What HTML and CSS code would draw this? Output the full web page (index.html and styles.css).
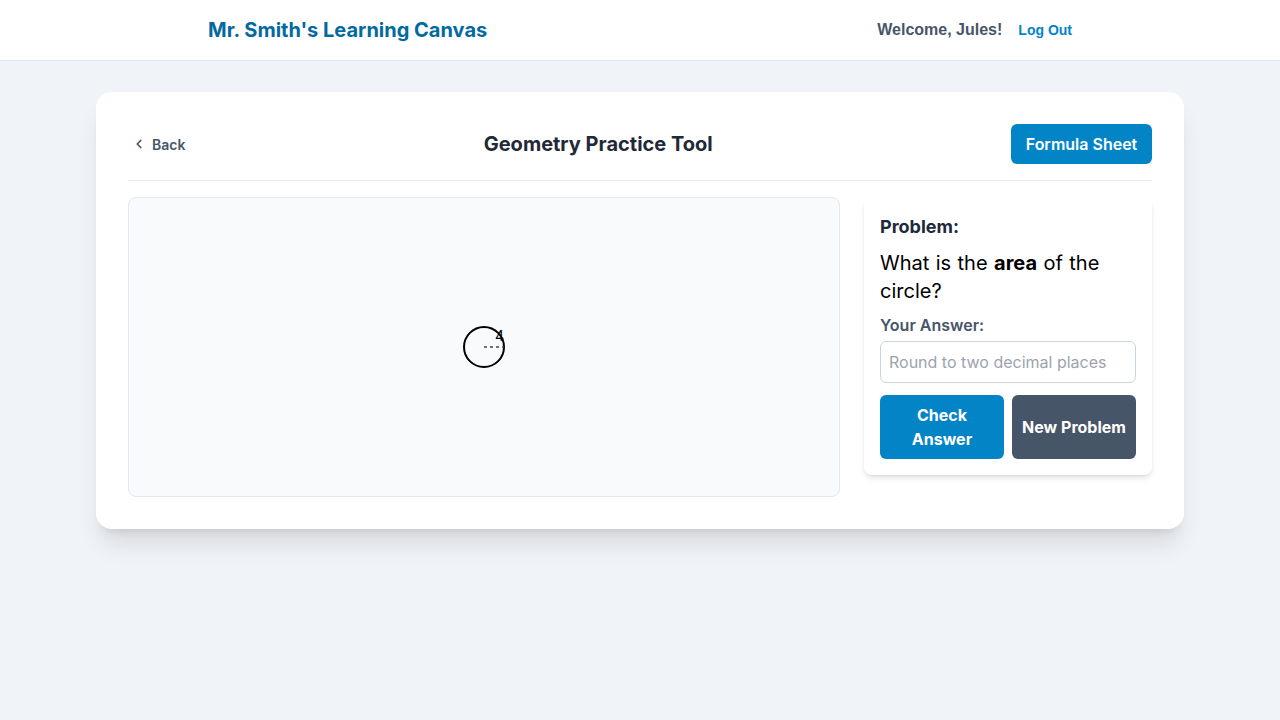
FILE: index.html
```html
<!DOCTYPE html>
<html>
<head>
<meta charset="utf-8">
<link rel="stylesheet" href="styles.css">
</head>
<body>
<header class="topbar">
  <div class="topbar-inner">
    <h1 class="brand">Mr. Smith's Learning Canvas</h1>
    <div class="user">
      <span class="welcome">Welcome, Jules!</span>
      <a class="logout" href="#">Log Out</a>
    </div>
  </div>
</header>
<main class="main">
  <section class="card">
    <div class="card-head">
      <a class="back" href="#">
        <svg width="14" height="14" viewBox="0 0 24 24" fill="none" stroke="currentColor" stroke-width="3" stroke-linecap="round" stroke-linejoin="round"><path d="M15 18l-6-6 6-6"/></svg>
        <span>Back</span>
      </a>
      <h2 class="title">Geometry Practice Tool</h2>
      <button class="btn-formula">Formula Sheet</button>
    </div>
    <div class="workspace">
      <div class="canvas">
        <svg width="80" height="80" viewBox="0 0 80 80" class="shape">
          <circle cx="40" cy="40" r="20" fill="none" stroke="#000" stroke-width="2"/>
          <line x1="40" y1="40" x2="60" y2="40" stroke="#444" stroke-width="1.5" stroke-dasharray="3 3"/>
          <text x="51" y="34" font-family="Inter, sans-serif" font-size="14" fill="#000">4</text>
        </svg>
      </div>
      <aside class="panel">
        <h3 class="panel-label">Problem:</h3>
        <p class="question">What is the <b>area</b> of the circle?</p>
        <label class="answer-label" for="ans">Your Answer:</label>
        <input id="ans" class="answer-input" type="text" placeholder="Round to two decimal places">
        <div class="actions">
          <button class="btn btn-check">Check Answer</button>
          <button class="btn btn-new">New Problem</button>
        </div>
      </aside>
    </div>
  </section>
</main>
</body>
</html>
```

FILE: styles.css
```css
* { box-sizing: border-box; }
html, body { margin: 0; padding: 0; }
body {
  background: #f0f4f8;
  font-family: Inter, "Liberation Sans", Arial, sans-serif;
  color: #1f2937;
  min-height: 720px;
}
.topbar {
  background: #fff;
  height: 61px;
  border-bottom: 1px solid #e2e8f0;
}
.topbar-inner {
  max-width: 896px;
  margin: 0 auto;
  padding: 0 16px;
  height: 60px;
  display: flex;
  align-items: center;
  justify-content: space-between;
  font-family: "Liberation Sans", Arial, sans-serif;
}
.brand {
  margin: 0;
  font-family: Inter, sans-serif;
  font-size: 20px;
  font-weight: 700;
  color: #0369a1;
}
.user { display: flex; align-items: center; gap: 16px; }
.welcome { font-size: 16px; font-weight: 700; color: #475569; }
.logout { font-size: 14px; font-weight: 700; color: #0284c7; text-decoration: none; }

.main {
  max-width: 1152px;
  margin: 0 auto;
  padding: 31px 32px;
}
.card {
  background: #fff;
  border-radius: 16px;
  padding: 32px;
  box-shadow: 0 20px 25px -5px rgba(0,0,0,0.1), 0 8px 10px -6px rgba(0,0,0,0.1);
}
.card-head {
  display: flex;
  align-items: center;
  justify-content: space-between;
  padding-bottom: 16px;
  border-bottom: 1px solid #e5e7eb;
}
.back {
  display: flex;
  align-items: center;
  gap: 6px;
  color: #475569;
  font-size: 14px;
  font-weight: 600;
  text-decoration: none;
  padding-left: 4px;
}
.title {
  margin: 0;
  font-size: 20px;
  font-weight: 700;
  color: #1f2937;
}
.btn-formula {
  width: 141px;
  height: 40px;
  border: 0;
  border-radius: 6px;
  background: #0284c7;
  color: #fff;
  font-family: Inter, sans-serif;
  font-size: 16px;
  font-weight: 600;
}
.workspace {
  display: flex;
  gap: 24px;
  margin-top: 16px;
  align-items: flex-start;
}
.canvas {
  flex: 1;
  height: 300px;
  background: #f8fafc;
  border: 1px solid #e2e8f0;
  border-radius: 8px;
  display: flex;
  align-items: center;
  justify-content: center;
}
.panel {
  width: 288px;
  background: #fff;
  border-radius: 8px;
  padding: 16px;
  box-shadow: 0 4px 6px -1px rgba(0,0,0,0.1), 0 2px 4px -2px rgba(0,0,0,0.1);
}
.panel-label {
  margin: 0;
  font-size: 18px;
  line-height: 28px;
  font-weight: 700;
  color: #1e293b;
}
.question {
  margin: 8px 0 0;
  font-size: 20px;
  line-height: 28px;
  word-spacing: 0.8px;
  color: #000;
}
.question b { font-weight: 700; }
.answer-label {
  display: block;
  margin-top: 8px;
  font-size: 16px;
  line-height: 24px;
  font-weight: 600;
  color: #475569;
}
.answer-input {
  display: block;
  width: 100%;
  height: 42px;
  margin-top: 4px;
  border: 1px solid #cbd5e1;
  border-radius: 6px;
  padding: 0 8px;
  font-family: Inter, sans-serif;
  font-size: 16px;
  color: #1f2937;
}
.answer-input::placeholder { color: #9ca3af; }
.actions {
  display: flex;
  gap: 8px;
  margin-top: 12px;
}
.btn {
  flex: 1;
  height: 64px;
  border: 0;
  border-radius: 6px;
  color: #fff;
  font-family: Inter, sans-serif;
  font-size: 16px;
  line-height: 24px;
  font-weight: 700;
  padding: 0 8px;
}
.btn-check { background: #0284c7; }
.btn-new { background: #475569; }
```
